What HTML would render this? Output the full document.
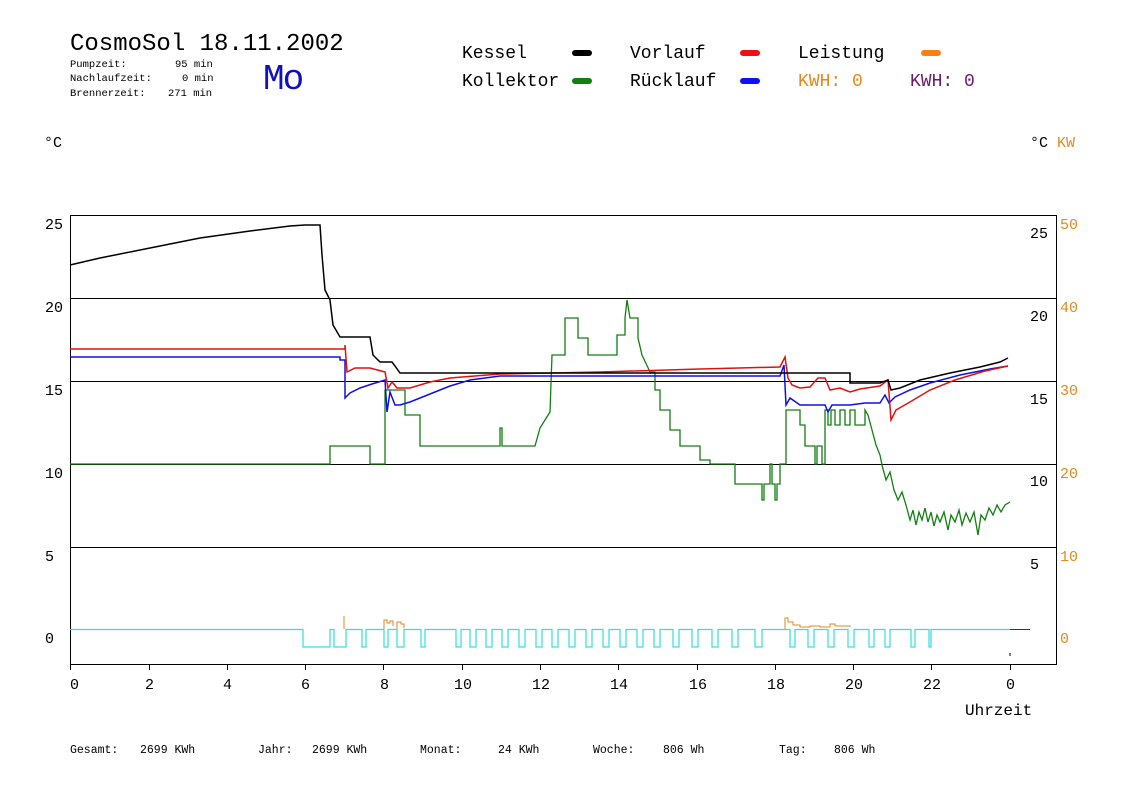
<!DOCTYPE html>
<html><head><meta charset="utf-8"><style>
html,body{margin:0;padding:0;background:#fff;width:1148px;height:812px;overflow:hidden}
svg{display:block}
</style></head><body>
<svg width="1148" height="812" viewBox="0 0 1148 812" xmlns="http://www.w3.org/2000/svg" font-family="Liberation Mono, monospace">
<text x="70" y="50" font-size="24" fill="#000" style="font-family:'Liberation Mono',monospace">CosmoSol 18.11.2002</text>
<g font-size="10.5" fill="#000" style="font-family:'Liberation Mono',monospace">
<text x="70" y="67">Pumpzeit:</text><text x="175" y="67">95 min</text>
<text x="70" y="81">Nachlaufzeit:</text><text x="182" y="81">0 min</text>
<text x="70" y="96">Brennerzeit:</text><text x="168" y="96">271 min</text>
</g>
<text x="263" y="89" font-size="36" fill="#1010c0" style="font-family:'Liberation Mono',monospace;letter-spacing:-2px">Mo</text>
<g font-size="18" fill="#000" style="font-family:'Liberation Mono',monospace">
<text x="462" y="58">Kessel</text><text x="462" y="86">Kollektor</text>
<text x="630" y="58">Vorlauf</text><text x="630" y="86">Rücklauf</text>
<text x="798" y="58">Leistung</text>
<text x="798" y="86" fill="#e08a20">KWH: 0</text>
<text x="910" y="86" fill="#6a1a6a">KWH: 0</text>
</g>
<g stroke-width="6" stroke-linecap="round">
<line x1="575" y1="53" x2="589" y2="53" stroke="#000"/>
<line x1="575" y1="81" x2="589" y2="81" stroke="#108010"/>
<line x1="743" y1="53" x2="757" y2="53" stroke="#f01010"/>
<line x1="743" y1="81" x2="757" y2="81" stroke="#1010f0"/>
<line x1="924" y1="53" x2="938" y2="53" stroke="#ff8010"/>
</g>
<g style="font-family:'Liberation Mono',monospace" font-size="15">
<text x="44" y="147">°C</text>
<text x="1030" y="147">°C <tspan fill="#e08a20">KW</tspan></text>
</g>
<g stroke="#000" stroke-width="1">
<line x1="70" y1="215.5" x2="1056" y2="215.5"/>
<line x1="70" y1="298.5" x2="1056" y2="298.5"/>
<line x1="70" y1="381.5" x2="1056" y2="381.5"/>
<line x1="70" y1="464.5" x2="1056" y2="464.5"/>
<line x1="70" y1="547.5" x2="1056" y2="547.5"/>
<line x1="70.5" y1="215" x2="70.5" y2="664"/>
<line x1="1056.5" y1="215" x2="1056.5" y2="664"/>
<line x1="70" y1="664.5" x2="1057" y2="664.5"/>
</g>
<g stroke="#000"><line x1="70.5" y1="664" x2="70.5" y2="670"/><line x1="149.5" y1="664" x2="149.5" y2="670"/><line x1="227.5" y1="664" x2="227.5" y2="670"/><line x1="305.5" y1="664" x2="305.5" y2="670"/><line x1="383.5" y1="664" x2="383.5" y2="670"/><line x1="462.5" y1="664" x2="462.5" y2="670"/><line x1="540.5" y1="664" x2="540.5" y2="670"/><line x1="618.5" y1="664" x2="618.5" y2="670"/><line x1="697.5" y1="664" x2="697.5" y2="670"/><line x1="775.5" y1="664" x2="775.5" y2="670"/><line x1="853.5" y1="664" x2="853.5" y2="670"/><line x1="931.5" y1="664" x2="931.5" y2="670"/><line x1="1010.5" y1="664" x2="1010.5" y2="670"/></g>
<g font-size="15" fill="#000" style="font-family:'Liberation Mono',monospace">
<text x="45" y="229">25</text><text x="45" y="312">20</text><text x="45" y="395">15</text><text x="45" y="478">10</text><text x="45" y="561">5</text><text x="45" y="643">0</text>
<text x="1030" y="238">25</text><text x="1030" y="321">20</text><text x="1030" y="404">15</text><text x="1030" y="486">10</text><text x="1030" y="569">5</text>
</g>
<g font-size="15" fill="#e08a20" style="font-family:'Liberation Mono',monospace">
<text x="1060" y="229">50</text><text x="1060" y="312">40</text><text x="1060" y="395">30</text><text x="1060" y="478">20</text><text x="1060" y="561">10</text><text x="1060" y="643">0</text>
</g>
<g font-size="15" fill="#000" style="font-family:'Liberation Mono',monospace">
<text x="70" y="689">0</text><text x="145" y="689">2</text><text x="223" y="689">4</text><text x="301" y="689">6</text><text x="380" y="689">8</text><text x="454" y="689">10</text><text x="532" y="689">12</text><text x="610" y="689">14</text><text x="689" y="689">16</text><text x="767" y="689">18</text><text x="845" y="689">20</text><text x="923" y="689">22</text><text x="1006" y="689">0</text>
<text x="965" y="715" font-size="16">Uhrzeit</text>
</g>
<g font-size="11.5" fill="#000" style="font-family:'Liberation Mono',monospace">
<text x="70" y="753">Gesamt:</text><text x="140" y="753">2699 KWh</text>
<text x="258" y="753">Jahr:</text><text x="312" y="753">2699 KWh</text>
<text x="420" y="753">Monat:</text><text x="498" y="753">24 KWh</text>
<text x="593" y="753">Woche:</text><text x="663" y="753">806 Wh</text>
<text x="779" y="753">Tag:</text><text x="834" y="753">806 Wh</text>
</g>
<path fill="none" stroke="#30e0e0" stroke-width="1.2" d="M70 629.5H303V647H330V629.5H334V647H346V629.5H362V647H366V629.5H384V647H388V629.5H397V647H404V629.5H421V647H425V629.5H456V647H461V629.5H470V647H476V629.5H486V647H492V629.5H502V647H508V629.5H519V647H525V629.5H536V647H542V629.5H552V647H558V629.5H569V647H575V629.5H586V647H592V629.5H603V647H609V629.5H620V647H626V629.5H637V647H643V629.5H654V647H660V629.5H673V647H679V629.5H692V647H698V629.5H712V647H718V629.5H732V647H738V629.5H755V647H762V629.5H790V647H795V629.5H808V647H814V629.5H828V647H834V629.5H848V647H854V629.5H869V647H874V629.5H885V647H890V629.5H911V647H915V629.5H929V647H931V629.5H1010"/>
<path fill="none" stroke="#6a1a3a" d="M1010 629.5H1030"/>
<path fill="none" stroke="#e08a20" d="M344 629V616M384 629V620H387V623H390V621H393V626M397 629V622H401V624H404V628M785 629V618H788V622H793V625H800V627H810V626H820V627H830V624H835V626H850V627"/>
<path fill="none" stroke="#108010" stroke-width="1.3" d="M70 464H330V446H370V464H385V390H405V415H420V446H500V428H502V446H535L540 428L550 412L552 355H565V318H578V338H588V355H617V335H625V318L627 300L630 318H638V338L642 355L650 372H655V390H660V410H670V430H680V446H700V460H710V464H735V484H762V500H764V484H770V464H772V484H775V500H777V484H780V464H782V464H786V410H800V425H805V446H815V464H817V446H822V464H825V410H828V425H831V410H835V425H840V410H845V425H850V410H855V425H865V410L868 415L872 430L876 445L880 455L882 465L886 480L890 472L894 490L898 500L902 492L906 505L910 520L913 510L916 525L919 512L922 520L925 508L928 522L931 512L934 526L937 515L940 522L944 512L948 530L951 515L955 522L959 510L962 525L966 513L970 522L974 512L978 535L981 515L985 520L989 508L993 515L997 505L1001 512L1005 505L1010 502"/>
<path fill="none" stroke="#1010e0" stroke-width="1.5" d="M70 357H340V360H345V398L350 393L360 388L372 384L385 380L387 412L390 392L395 405H400L410 402L430 394L450 386L470 380L500 376H780L784 365L786 405L790 398L800 405H825L828 412L832 405H850L865 403H880L885 395L889 403L895 397L910 390L930 383L960 375L990 369L1008 366"/>
<path fill="none" stroke="#e01010" stroke-width="1.5" d="M70 349H345V345L347 372L355 368H370L385 372L388 388L392 382L397 388L410 388L430 382L450 378L500 374L600 372L700 369L780 367L785 357L788 378L792 385L800 388L810 387L818 378L825 378L830 390L840 388L850 392L860 389L880 386L888 380L891 420L896 410L910 402L930 390L955 380L985 371L1008 366"/>
<path fill="none" stroke="#000" stroke-width="1.5" d="M70 265L100 258L150 248L200 238L250 231L290 226L305 225H320L322 255L325 290L330 300L333 325L340 337H370L373 355L380 362H392L395 366L400 373H850V383H880L888 380L891 390L900 388L920 380L950 373L980 367L1000 362L1008 358"/>
<line x1="1010" y1="653" x2="1010" y2="656" stroke="#000"/>
</svg>
</body></html>
